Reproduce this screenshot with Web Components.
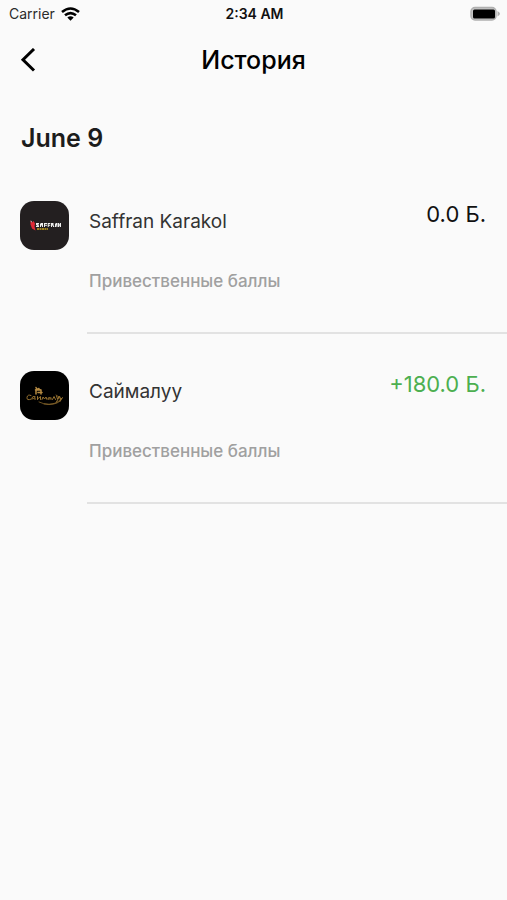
<!DOCTYPE html>
<html lang="ru">
<head>
<meta charset="utf-8">
<meta name="viewport" content="width=device-width, initial-scale=1">
<title>История</title>
<style>
body { margin: 0; background: #fafafa; color: #000; font-family: Inter, "Liberation Sans", sans-serif; }
</style>
</head>
<body>
<history-page>
  <status-bar></status-bar>
  <app-header>История</app-header>
  <history-day>
    <span slot="date">June 9</span>
    <history-entry>
      <saffran-logo slot="logo"></saffran-logo>
      <span slot="name">Saffran Karakol</span>
      <span slot="amount">0.0 Б.</span>
      <span slot="note">Привественные баллы</span>
    </history-entry>
    <history-entry positive>
      <saimaluu-logo slot="logo"></saimaluu-logo>
      <span slot="name">Саймалуу</span>
      <span slot="amount">+180.0 Б.</span>
      <span slot="note">Привественные баллы</span>
    </history-entry>
  </history-day>
</history-page>
<script>
function component(name, html) {
  const template = document.createElement('template');
  template.innerHTML = html;
  customElements.define(name, class extends HTMLElement {
    constructor() {
      super();
      this.attachShadow({ mode: 'open' }).append(template.content.cloneNode(true));
    }
  });
}

component('history-page', `
<style>:host { display: flex; flex-direction: column; min-height: 100vh; background: #fafafa; }</style>
<slot></slot>`);

component('status-bar', `
<style>
:host { display: grid; grid-template-columns: 1fr auto 1fr; align-items: center; height: 28px; padding: 0 7px 0 9px; font-size: 14px; line-height: 20px; }
.left { display: flex; align-items: center; gap: 6px; color: #2b2b2b; }
time { font-weight: 600; color: #111; }
.right { display: flex; justify-content: flex-end; }
svg { display: block; }
</style>
<div class="left"><span>Carrier</span>
<svg width="19" height="15" viewBox="0 0 19 15" fill="none" stroke="#000" stroke-width="2.600" aria-label="Wi-Fi"><path d="M1 5Q9.500-2 18 5M4 8.300Q9.500 3.800 15 8.300"/><path d="M6.300 10.500Q9.500 8 12.700 10.500L9.500 13.800Z" fill="#000" stroke="none"/></svg></div>
<time>2:34 AM</time>
<div class="right"><svg width="30" height="16" viewBox="0 0 30 16" aria-label="Battery"><rect x="1" y="1.500" width="25" height="12.500" rx="4" fill="#c4c4c4" stroke="#b0b0b0" stroke-width="1.500"/><rect x="3" y="3.500" width="22" height="9" rx="1.500"/><path d="M27.500 5Q30 6.500 30 7.700T27.500 10.500Z" fill="#b0b0b0"/></svg></div>`);

component('app-header', `
<style>
:host { display: grid; grid-template-columns: 56px 1fr 56px; align-items: center; height: 64px; }
button { display: grid; place-items: center; width: 56px; height: 48px; padding: 0; border: 0; background: none; cursor: pointer; }
h1 { margin: 0; font-size: 25px; line-height: 32px; font-weight: 500; text-align: center; }
</style>
<button type="button" aria-label="Назад"><svg width="16" height="24" viewBox="0 0 16 24" fill="none" stroke="#000" stroke-width="3"><path d="M14 1L3 11.700L14 22.500"/></svg></button>
<h1><slot></slot></h1>`);

component('history-day', `
<style>
:host { display: block; padding-top: 30px; }
h2 { margin: 0; padding: 0 21px 10px; font-size: 25px; line-height: 32px; font-weight: 600; color: #1c1c1c; }
</style>
<h2><slot name="date"></slot></h2>
<slot></slot>`);

component('history-entry', `
<style>
:host { display: grid; grid-template-columns: 49px 1fr; column-gap: 18px; padding: 37px 0 0 20px; }
article { display: contents; }
.details { display: flex; flex-direction: column; min-width: 0; border-bottom: 2px solid #e2e2e2; padding-bottom: 39px; gap: 34px; }
.line { display: flex; justify-content: space-between; align-items: flex-start; padding: 0 21px 0 2px; }
.name { padding-top: 8px; font-size: 19px; line-height: 26px; color: #333; }
.amount { font-size: 22px; line-height: 26px; color: #111; white-space: nowrap; }
:host([positive]) .amount { color: #4caf50; }
.note { margin: 0; padding: 0 2px; font-size: 17px; line-height: 24px; font-weight: 500; color: #a0a0a0; }
</style>
<article>
  <slot name="logo"></slot>
  <div class="details">
    <div class="line"><div class="name"><slot name="name"></slot></div><div class="amount"><slot name="amount"></slot></div></div>
    <p class="note"><slot name="note"></slot></p>
  </div>
</article>`);

const logoStyle = '<style>:host { display: block; width: 49px; height: 49px; } svg { display: block; }</style>';

component('saffran-logo', logoStyle + `
<svg width="49" height="49" viewBox="0 0 49 49" role="img" aria-label="Saffran">
<rect width="49" height="49" rx="14" fill="#231f20"/>
<path d="M10.500 19.500l1.500 2 1.500-1.500 1.500 2.500-.5 3 1 4-3.500-2-1.500-4Z" fill="#e02835"/>
<path d="M10.500 19.500l1 .5.500 1.500-1-.5Z" fill="#ddd"/>
<path d="M16 22h3v1.500h-1.500l1.500 1V26h-3v-1h1.500l-1.500-1ZM20 26v-3l1-1h2v4h-1v-1.500h-1V26ZM24 22h3v1h-2v.7h2v1h-2V26h-1ZM27.700 22h2.600v1h-1.600v.7h1.600v1h-1.600V26h-1ZM31 22h2.500v2l1 2h-1.300l-.7-1.500h-.5V26h-1ZM35 26v-3l1-1h1.500v4h-1v-1.500h-.5V26ZM38 22h1l1 2v-2h1v4h-1l-1-2v2h-1Z" fill="#eee"/>
<path d="M17 28h11" stroke="#c9a21b" stroke-width="1.300" stroke-dasharray="2 .5"/>
</svg>`);

component('saimaluu-logo', logoStyle + `
<svg width="49" height="49" viewBox="0 0 49 49" role="img" aria-label="Саймалуу">
<rect width="49" height="49" rx="14" fill="#000"/>
<g fill="none" stroke="#987331" stroke-width="1" stroke-linecap="round" stroke-linejoin="round">
<path d="M11 24.500Q7.500 23 7 26.500T11.500 28M15 25.500q-3-.5-3 1.500t3-.500v2M17.500 25.500v3M17.500 28l3-2.500v3M22 28.500l1-2.500 1.500 2 1.500-2 1 2.500M29.500 26.500q-2 0-1.500 1.500t3-1.500v2M32.500 28.500l1.500-3 1.500 3M36.500 25l1 3 2-3-3 6M40 26l.500 2.500 2-2-2.500 4"/>
<path d="M19 31Q29 35.500 37 32T36 24M24 33Q36 34.500 41 28" opacity=".7"/>
<path d="M16 23v-4h5v4M15.500 19l2-1 3.500 1M16 16.500l1 2 2-1M18 21.500h4" stroke="#b58a42" stroke-width="1.500"/>
</g>
</svg>`);
</script>
</body>
</html>
